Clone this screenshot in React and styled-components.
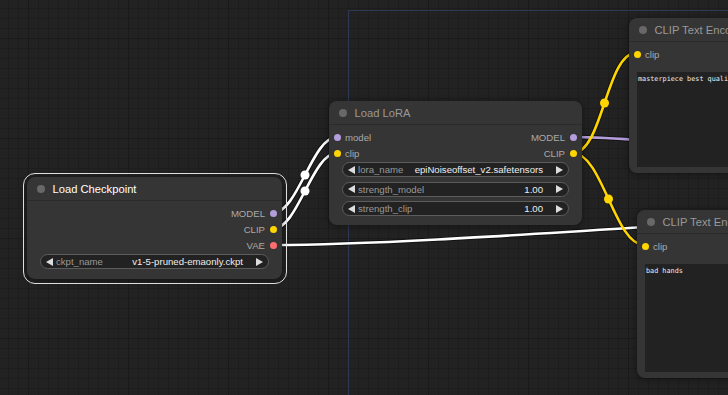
import React from "react";
import styled, { createGlobalStyle, css } from "styled-components";

const GlobalStyle = createGlobalStyle`
  html, body { margin: 0; padding: 0; overflow: hidden; background: #222; }
  * { box-sizing: border-box; }
`;

const Canvas = styled.div`
  position: relative;
  width: 728px;
  height: 395px;
  overflow: hidden;
  font-family: "Liberation Sans", Arial, sans-serif;
  background-color: #222;
  background-image:
    linear-gradient(#1a1a1a 1px, transparent 1px),
    linear-gradient(90deg, #1a1a1a 1px, transparent 1px),
    linear-gradient(#1d1d1d 1px, transparent 1px),
    linear-gradient(90deg, #1d1d1d 1px, transparent 1px);
  background-size: 100px 100px, 100px 100px, 10px 10px, 10px 10px;
  background-position: 28px 38px, 28px 38px, 8px 8px, 8px 8px;
`;

const Group = styled.div`
  position: absolute;
  left: 348px;
  top: 10px;
  width: 600px;
  height: 600px;
  border: 1.5px solid #2d3857;
`;

const Wires = styled.svg`
  position: absolute;
  left: 0;
  top: 0;
  width: 728px;
  height: 395px;
`;

const Node = styled.div`
  position: absolute;
  left: ${(p) => p.$x}px;
  top: ${(p) => p.$y}px;
  width: ${(p) => p.$w}px;
  background: #353535;
  border-radius: 8px;
  box-shadow: 0 1px 6px rgba(0, 0, 0, 0.45);
  display: flex;
  flex-direction: column;
  ${(p) =>
    p.$selected &&
    css`
      &::after {
        content: "";
        position: absolute;
        inset: -4.5px;
        border: 1.5px solid #dedede;
        border-radius: 12px;
        pointer-events: none;
      }
    `}
`;

const Title = styled.div`
  height: 24px;
  display: flex;
  align-items: center;
  gap: 7.5px;
  padding-left: 10px;
  border-bottom: 1px solid #2b2b2b;
  font-size: 11.2px;
  color: ${(p) => (p.$selected ? "#fff" : "#999")};
  white-space: nowrap;
  overflow: hidden;
`;

const TitleDot = styled.span`
  width: 8px;
  height: 8px;
  border-radius: 50%;
  background: #686868;
  flex: none;
`;

const Body = styled.div`
  display: flex;
  flex-direction: column;
  padding: 4px 0 ${(p) => p.$pb}px;
`;

const SlotRow = styled.div`
  height: 16px;
  display: flex;
  align-items: center;
  justify-content: space-between;
  padding: 0 5.5px 0 4.5px;
  font-size: 9.6px;
  color: #aaa;
`;

const Slot = styled.div`
  display: flex;
  align-items: center;
  gap: 4.5px;
  flex-direction: ${(p) => (p.$out ? "row-reverse" : "row")};
  margin-left: ${(p) => (p.$out ? "auto" : "0")};
`;

const SlotDot = styled.span`
  width: 7px;
  height: 7px;
  border-radius: 50%;
  background: ${(p) => p.$color};
`;

const Widgets = styled.div`
  display: flex;
  flex-direction: column;
  gap: 4.5px;
  margin: 1px 13px 0;
`;

const Widget = styled.div`
  height: 15px;
  display: flex;
  align-items: center;
  padding: 0 5px;
  background: #222;
  border: 1px solid #5c5c5c;
  border-radius: 8px;
  font-size: 9.6px;
  white-space: nowrap;
`;

const WLabel = styled.span`
  color: #999;
  margin-left: 3px;
`;

const WValue = styled.span`
  color: #eee;
  margin-left: auto;
  margin-right: 13px;
`;

const TextArea = styled.div`
  margin: 10px 0 0 8px;
  height: ${(p) => p.$h}px;
  background: #222;
  padding: 3px 1px 0;
  font-family: "DejaVu Sans Mono", "Liberation Mono", monospace;
  font-size: 6.8px;
  line-height: 8px;
  color: #eee;
  white-space: nowrap;
`;

const Arrow = ({ right }) => (
  <svg width="7" height="8" viewBox="0 0 7 8">
    <polygon points={right ? "0,0 7,4 0,8" : "7,0 0,4 7,8"} fill="#ddd" />
  </svg>
);

const Combo = ({ label, value }) => (
  <Widget>
    <Arrow />
    <WLabel>{label}</WLabel>
    <WValue>{value}</WValue>
    <Arrow right />
  </Widget>
);

const COLORS = { MODEL: "#b39ddb", CLIP: "#ffd500", VAE: "#ff6e6e" };

const spline = (a, b) => {
  const d = Math.hypot(b[0] - a[0], b[1] - a[1]) * 0.25;
  return `M${a[0]},${a[1]} C${a[0] + d},${a[1]} ${b[0] - d},${b[1]} ${b[0]},${b[1]}`;
};

const mid = (a, b) => {
  const d = Math.hypot(b[0] - a[0], b[1] - a[1]) * 0.25;
  return [(a[0] + 3 * (a[0] + d) + 3 * (b[0] - d) + b[0]) / 8, (a[1] * 4 + b[1] * 4) / 8];
};

const links = [
  { a: [273, 213], b: [337, 137], color: "#fff", marker: true },
  { a: [273, 229], b: [337, 153], color: "#fff", marker: true },
  { a: [273, 245], b: [1000, 210], color: "#fff" },
  { a: [573, 137], b: [900, 160], color: COLORS.MODEL },
  { a: [573, 153], b: [636, 53], color: COLORS.CLIP, marker: true },
  { a: [573, 153], b: [644, 245], color: COLORS.CLIP, marker: true },
];

const Links = () => (
  <Wires>
    {links.map((l, i) => (
      <path key={"s" + i} d={spline(l.a, l.b)} stroke="rgba(0,0,0,0.45)" strokeWidth="4.5" fill="none" />
    ))}
    {links.map((l, i) => (
      <path key={"l" + i} d={spline(l.a, l.b)} stroke={l.color} strokeWidth="2.6" fill="none" />
    ))}
    {links
      .filter((l) => l.marker)
      .map((l, i) => {
        const [x, y] = mid(l.a, l.b);
        return <circle key={"m" + i} cx={x} cy={y} r="4.5" fill={l.color} />;
      })}
  </Wires>
);

const In = ({ type, children }) => (
  <Slot>
    <SlotDot $color={COLORS[type]} />
    {children}
  </Slot>
);

const Out = ({ type, children }) => (
  <Slot $out>
    <SlotDot $color={COLORS[type]} />
    {children}
  </Slot>
);

export default function App() {
  return (
    <>
      <GlobalStyle />
      <Canvas>
        <Group />
        <Links />

        <Node $x={27} $y={177} $w={255} $selected>
          <Title $selected>
            <TitleDot />
            Load Checkpoint
          </Title>
          <Body $pb={10}>
            <SlotRow>
              <Out type="MODEL">MODEL</Out>
            </SlotRow>
            <SlotRow>
              <Out type="CLIP">CLIP</Out>
            </SlotRow>
            <SlotRow>
              <Out type="VAE">VAE</Out>
            </SlotRow>
            <Widgets>
              <Combo label="ckpt_name" value="v1-5-pruned-emaonly.ckpt" />
            </Widgets>
          </Body>
        </Node>

        <Node $x={329} $y={101} $w={253}>
          <Title>
            <TitleDot />
            Load LoRA
          </Title>
          <Body $pb={9}>
            <SlotRow>
              <In type="MODEL">model</In>
              <Out type="MODEL">MODEL</Out>
            </SlotRow>
            <SlotRow>
              <In type="CLIP">clip</In>
              <Out type="CLIP">CLIP</Out>
            </SlotRow>
            <Widgets>
              <Combo label="lora_name" value="epiNoiseoffset_v2.safetensors" />
              <Combo label="strength_model" value="1.00" />
              <Combo label="strength_clip" value="1.00" />
            </Widgets>
          </Body>
        </Node>

        <Node $x={629} $y={18} $w={400}>
          <Title>
            <TitleDot />
            CLIP Text Encode (Prompt)
          </Title>
          <Body $pb={6}>
            <SlotRow>
              <In type="CLIP">clip</In>
            </SlotRow>
            <TextArea $h={95}>masterpiece best quality, 1girl, solo</TextArea>
          </Body>
        </Node>

        <Node $x={637} $y={210} $w={400}>
          <Title>
            <TitleDot />
            CLIP Text Encode (Prompt)
          </Title>
          <Body $pb={6}>
            <SlotRow>
              <In type="CLIP">clip</In>
            </SlotRow>
            <TextArea $h={108}>bad hands</TextArea>
          </Body>
        </Node>
      </Canvas>
    </>
  );
}
